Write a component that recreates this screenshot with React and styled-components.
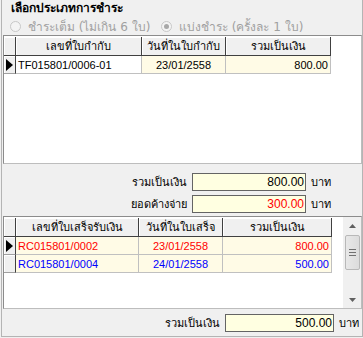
import styled, { createGlobalStyle } from 'styled-components';

const GlobalStyle = createGlobalStyle`
  body {
    margin: 0;
    background: #f0f0f0;
    font-family: Tahoma, "DejaVu Sans", "Noto Sans", sans-serif;
    font-size: 11px;
    color: #000;
  }
`;

const grid1Cols = '12px 126px 84px 105px';
const grid2Cols = '12px 123px 84px 109px';

const firstRows = [
  { no: 'TF015801/0006-01', date: '23/01/2558', total: '800.00', current: true },
];

const receiptRows = [
  { no: 'RC015801/0002', date: '23/01/2558', total: '800.00', color: '#ff0000', current: true },
  { no: 'RC015801/0004', date: '24/01/2558', total: '500.00', color: '#0000ff' },
];

function Arrow() {
  return (
    <svg width="7" height="12" viewBox="0 0 7 12">
      <polygon points="0,0 7,6 0,12" fill="#000" />
    </svg>
  );
}

function Radio({ label, checked, width }) {
  return (
    <RadioItem width={width}>
      <RadioCircle>{checked && <RadioDot />}</RadioCircle>
      <span>{label}</span>
    </RadioItem>
  );
}

export default function App() {
  return (
    <>
      <GlobalStyle />
      <Panel>
        <Title>เลือกประเภทการชำระ</Title>
        <RadioRow>
          <Radio label="ชำระเต็ม (ไม่เกิน 6 ใบ)" width={151} />
          <Radio label="แบ่งชำระ (ครั้งละ 1 ใบ)" checked />
        </RadioRow>

        <GridBox height={129}>
          <GridBody>
            <GridRow cols={grid1Cols} header>
              <HeadCell />
              <HeadCell>เลขที่ใบกำกับ</HeadCell>
              <HeadCell>วันที่ในใบกำกับ</HeadCell>
              <HeadCell>รวมเป็นเงิน</HeadCell>
            </GridRow>
            {firstRows.map(r => (
              <GridRow cols={grid1Cols} key={r.no}>
                <Indicator>{r.current && <Arrow />}</Indicator>
                <Cell bg="#ffffff">{r.no}</Cell>
                <Cell align="center">{r.date}</Cell>
                <Cell align="right">{r.total}</Cell>
              </GridRow>
            ))}
          </GridBody>
        </GridBox>

        <SumRow labelWidth={185} boxWidth={114} top={9}>
          <SumLabel>รวมเป็นเงิน</SumLabel>
          <SumBox>800.00</SumBox>
          <Unit>บาท</Unit>
        </SumRow>
        <SumRow labelWidth={185} boxWidth={114} top={4}>
          <SumLabel>ยอดค้างจ่าย</SumLabel>
          <SumBox color="#ff0000">300.00</SumBox>
          <Unit>บาท</Unit>
        </SumRow>

        <GridBox height={93} top={3}>
          <GridBody>
            <GridRow cols={grid2Cols} header>
              <HeadCell />
              <HeadCell>เลขที่ใบเสร็จรับเงิน</HeadCell>
              <HeadCell>วันที่ในใบเสร็จ</HeadCell>
              <HeadCell>รวมเป็นเงิน</HeadCell>
            </GridRow>
            {receiptRows.map(r => (
              <GridRow cols={grid2Cols} key={r.no}>
                <Indicator>{r.current && <Arrow />}</Indicator>
                <Cell color={r.color}>{r.no}</Cell>
                <Cell color={r.color} align="center">{r.date}</Cell>
                <Cell color={r.color} align="right">{r.total}</Cell>
              </GridRow>
            ))}
          </GridBody>
          <ScrollBar>
            <ScrollButton>
              <svg width="7" height="4" viewBox="0 0 7 4"><polygon points="0,4 3.5,0 7,4" fill="#606060" /></svg>
            </ScrollButton>
            <Track>
              <Thumb>
                <Grip />
                <Grip />
                <Grip />
              </Thumb>
            </Track>
            <ScrollButton>
              <svg width="7" height="4" viewBox="0 0 7 4"><polygon points="0,0 3.5,4 7,0" fill="#606060" /></svg>
            </ScrollButton>
          </ScrollBar>
        </GridBox>

        <SumRow labelWidth={218} boxWidth={109} top={5}>
          <SumLabel>รวมเป็นเงิน</SumLabel>
          <SumBox>500.00</SumBox>
          <Unit>บาท</Unit>
        </SumRow>
      </Panel>
    </>
  );
}

const Panel = styled.div`
  box-sizing: border-box;
  width: 362px;
  height: 337px;
  margin-left: 1px;
  border: 1px solid #b4b4b4;
  border-top: none;
  display: flex;
  flex-direction: column;
`;

const Title = styled.div`
  height: 18px;
  line-height: 16px;
  padding-left: 9px;
  font-weight: 700;
  font-size: 12px;
  white-space: nowrap;
`;

const RadioRow = styled.div`
  height: 17px;
  display: flex;
  align-items: center;
  padding-left: 8px;
  color: #a0a0a0;
  font-size: 12px;
  white-space: nowrap;
`;

const RadioItem = styled.label`
  display: flex;
  align-items: center;
  gap: 7px;
  width: ${({ width }) => width ? width + 'px' : 'auto'};
`;

const RadioCircle = styled.span`
  box-sizing: border-box;
  width: 11px;
  height: 11px;
  border-radius: 50%;
  border: 1px solid #c8c8c8;
  background: #f4f4f4;
  display: flex;
  align-items: center;
  justify-content: center;
`;

const RadioDot = styled.span`
  width: 5px;
  height: 5px;
  border-radius: 50%;
  background: #a8a8a8;
`;

const GridBox = styled.div`
  box-sizing: border-box;
  margin: ${({ top }) => top || 0}px 0 0 1px;
  width: 359px;
  height: ${({ height }) => height}px;
  border: 1px solid #8c8c8c;
  border-right-color: #bdbdbd;
  border-bottom-color: #bdbdbd;
  background: #fff;
  display: flex;
`;

const GridBody = styled.div`
  flex: 1;
  padding-top: 1px;
`;

const GridRow = styled.div`
  display: grid;
  grid-template-columns: ${({ cols }) => cols};
  height: ${({ header }) => header ? 19 : 18}px;
`;

const HeadCell = styled.div`
  box-sizing: border-box;
  background: #f0f0f0;
  border-right: 1px solid #404040;
  border-bottom: 1px solid #404040;
  box-shadow: inset 1px 1px 0 #fff;
  display: flex;
  align-items: center;
  justify-content: center;
  white-space: nowrap;
`;

const Indicator = styled.div`
  box-sizing: border-box;
  background: #f0f0f0;
  border-right: 1px solid #404040;
  border-bottom: 1px solid #a0a0a0;
  box-shadow: inset 1px 1px 0 #fff;
  display: flex;
  align-items: center;
  padding-left: 2px;
`;

const Cell = styled.div`
  box-sizing: border-box;
  background: ${({ bg }) => bg || '#fffbe6'};
  color: ${({ color }) => color || '#000'};
  border-right: 1px solid #c0c0c0;
  border-bottom: 1px solid #c0c0c0;
  display: flex;
  align-items: center;
  justify-content: ${({ align }) => align === 'center' ? 'center' : align === 'right' ? 'flex-end' : 'flex-start'};
  padding: 0 2px;
  font-family: "Liberation Sans", Arial, sans-serif;
  font-size: 11px;
  white-space: nowrap;
`;

const SumRow = styled.div`
  display: grid;
  grid-template-columns: ${({ labelWidth }) => labelWidth}px ${({ boxWidth }) => boxWidth}px auto;
  column-gap: 5px;
  align-items: center;
  margin-top: ${({ top }) => top}px;
  height: 18px;
`;

const SumLabel = styled.div`
  text-align: right;
  font-size: 11px;
  white-space: nowrap;
`;

const SumBox = styled.div`
  box-sizing: border-box;
  height: 18px;
  border: 1px solid #646464;
  background: #ffffe1;
  color: ${({ color }) => color || '#000'};
  text-align: right;
  padding-right: 1px;
  line-height: 16px;
  font-family: "Liberation Sans", Arial, sans-serif;
  font-size: 12px;
`;

const Unit = styled.div`
  font-size: 11px;
  white-space: nowrap;
`;

const ScrollBar = styled.div`
  width: 17px;
  display: flex;
  flex-direction: column;
  background: #f0f0f0;
  border-left: 1px solid #f0f0f0;
`;

const ScrollButton = styled.div`
  height: 17px;
  display: flex;
  align-items: center;
  justify-content: center;
`;

const Track = styled.div`
  flex: 1;
  padding: 1px 1px;
`;

const Thumb = styled.div`
  box-sizing: border-box;
  height: 35px;
  border: 1px solid #b8b8b8;
  border-radius: 2px;
  background: linear-gradient(to right, #e8e8e8, #dcdcdc);
  display: flex;
  flex-direction: column;
  align-items: center;
  justify-content: center;
  gap: 2px;
`;

const Grip = styled.span`
  width: 7px;
  height: 1px;
  background: #707070;
`;
